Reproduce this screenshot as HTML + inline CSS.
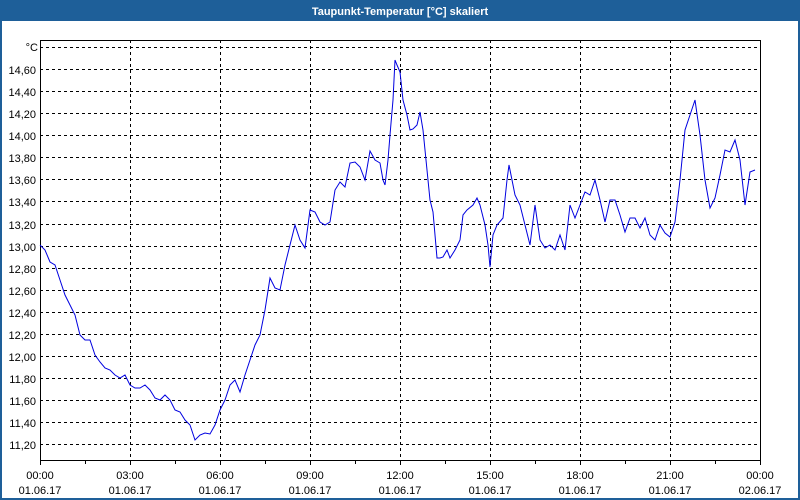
<!DOCTYPE html>
<html><head><meta charset="utf-8"><style>
html,body{margin:0;padding:0;background:#fff;}
body{width:800px;height:500px;position:relative;overflow:hidden;font-family:"Liberation Sans","DejaVu Sans",sans-serif;}
</style></head><body>
<svg width="800" height="500" xmlns="http://www.w3.org/2000/svg" style="position:absolute;left:0;top:0">
<rect x="0" y="0" width="800" height="500" fill="#fff"/>
<rect x="0" y="0" width="800" height="21" fill="#1e5f99"/>
<rect x="0" y="0" width="2" height="500" fill="#1e5f99"/>
<rect x="798" y="0" width="2" height="500" fill="#1e5f99"/>
<rect x="0" y="498" width="800" height="2" fill="#1e5f99"/>
<text x="400" y="15" fill="#fff" font-size="11" font-weight="bold" text-anchor="middle">Taupunkt-Temperatur [°C] skaliert</text>
<g stroke="#000" stroke-width="1" stroke-dasharray="3,3" fill="none" shape-rendering="crispEdges">
<line x1="40" y1="47.5" x2="760" y2="47.5"/>
<line x1="40" y1="69.5" x2="760" y2="69.5"/>
<line x1="40" y1="91.5" x2="760" y2="91.5"/>
<line x1="40" y1="113.5" x2="760" y2="113.5"/>
<line x1="40" y1="135.5" x2="760" y2="135.5"/>
<line x1="40" y1="157.5" x2="760" y2="157.5"/>
<line x1="40" y1="179.5" x2="760" y2="179.5"/>
<line x1="40" y1="201.5" x2="760" y2="201.5"/>
<line x1="40" y1="224.5" x2="760" y2="224.5"/>
<line x1="40" y1="246.5" x2="760" y2="246.5"/>
<line x1="40" y1="268.5" x2="760" y2="268.5"/>
<line x1="40" y1="290.5" x2="760" y2="290.5"/>
<line x1="40" y1="312.5" x2="760" y2="312.5"/>
<line x1="40" y1="334.5" x2="760" y2="334.5"/>
<line x1="40" y1="356.5" x2="760" y2="356.5"/>
<line x1="40" y1="378.5" x2="760" y2="378.5"/>
<line x1="40" y1="400.5" x2="760" y2="400.5"/>
<line x1="40" y1="422.5" x2="760" y2="422.5"/>
<line x1="40" y1="444.5" x2="760" y2="444.5"/>
<line x1="130.5" y1="40" x2="130.5" y2="460"/>
<line x1="220.5" y1="40" x2="220.5" y2="460"/>
<line x1="310.5" y1="40" x2="310.5" y2="460"/>
<line x1="400.5" y1="40" x2="400.5" y2="460"/>
<line x1="490.5" y1="40" x2="490.5" y2="460"/>
<line x1="580.5" y1="40" x2="580.5" y2="460"/>
<line x1="670.5" y1="40" x2="670.5" y2="460"/>
</g>
<g stroke="#000" stroke-width="1" fill="none" shape-rendering="crispEdges">
<line x1="40.5" y1="40" x2="40.5" y2="465"/>
<line x1="40" y1="40.5" x2="761" y2="40.5"/>
<line x1="760.5" y1="40" x2="760.5" y2="465"/>
<line x1="40" y1="460.5" x2="761" y2="460.5"/>
<line x1="85.5" y1="460" x2="85.5" y2="464"/><line x1="130.5" y1="460" x2="130.5" y2="465"/>
<line x1="175.5" y1="460" x2="175.5" y2="464"/><line x1="220.5" y1="460" x2="220.5" y2="465"/>
<line x1="265.5" y1="460" x2="265.5" y2="464"/><line x1="310.5" y1="460" x2="310.5" y2="465"/>
<line x1="355.5" y1="460" x2="355.5" y2="464"/><line x1="400.5" y1="460" x2="400.5" y2="465"/>
<line x1="445.5" y1="460" x2="445.5" y2="464"/><line x1="490.5" y1="460" x2="490.5" y2="465"/>
<line x1="535.5" y1="460" x2="535.5" y2="464"/><line x1="580.5" y1="460" x2="580.5" y2="465"/>
<line x1="625.5" y1="460" x2="625.5" y2="464"/><line x1="670.5" y1="460" x2="670.5" y2="465"/>
<line x1="715.5" y1="460" x2="715.5" y2="464"/>
</g>
<g font-size="11" fill="#000" text-anchor="end">
<text x="38" y="51">°C</text>
<text x="36" y="74">14,60</text><text x="36" y="96">14,40</text><text x="36" y="118">14,20</text>
<text x="36" y="140">14,00</text><text x="36" y="162">13,80</text><text x="36" y="184">13,60</text>
<text x="36" y="206">13,40</text><text x="36" y="229">13,20</text><text x="36" y="251">13,00</text>
<text x="36" y="273">12,80</text><text x="36" y="295">12,60</text><text x="36" y="317">12,40</text>
<text x="36" y="339">12,20</text><text x="36" y="361">12,00</text><text x="36" y="383">11,80</text>
<text x="36" y="405">11,60</text><text x="36" y="427">11,40</text><text x="36" y="449">11,20</text>
</g>
<g font-size="11" fill="#000" text-anchor="middle">
<text x="40" y="479">00:00</text><text x="40" y="494">01.06.17</text>
<text x="130" y="479">03:00</text><text x="130" y="494">01.06.17</text>
<text x="220" y="479">06:00</text><text x="220" y="494">01.06.17</text>
<text x="310" y="479">09:00</text><text x="310" y="494">01.06.17</text>
<text x="400" y="479">12:00</text><text x="400" y="494">01.06.17</text>
<text x="490" y="479">15:00</text><text x="490" y="494">01.06.17</text>
<text x="580" y="479">18:00</text><text x="580" y="494">01.06.17</text>
<text x="670" y="479">21:00</text><text x="670" y="494">01.06.17</text>
<text x="760" y="479">00:00</text><text x="760" y="494">02.06.17</text>
</g>
<polyline fill="none" stroke="#0000e0" stroke-width="1" points="40,245 45,250 50,262 55,265 60,280 65,295 70,305 75,315 80,335 85,340 90,340 95,355 100,362 105,368 110,370 115,375 120,378 125,375 130,385 135,388 140,388 145,385 150,390 155,398 160,400 165,395 170,400 175,410 180,412 185,420 190,425 195,440 200,435 205,433 210,434 215,425 220,410 225,400 230,385 235,380 240,392 245,375 250,360 255,345 260,335 265,310 270,278 275,288 280,290 285,265 290,245 295,225 300,240 305,248 310,210 315,212 320,222 325,225 330,222 335,190 340,182 345,187 350,163 355,162 360,167 365,180 370,151 375,160 380,163 383,180 385,185 388,160 390,135 393,100 395,60 397,65 400,72 403,100 407,115 410,130 413,129 417,125 420,112 423,130 426,160 430,200 433,212 437,258 440,258 443,257 447,250 450,258 455,250 460,240 463,215 467,210 473,205 477,198 480,205 485,225 488,245 490,267 493,235 497,225 503,218 507,180 509,165 515,195 520,205 525,225 530,245 535,205 540,240 545,248 550,245 555,250 560,235 565,250 570,205 575,218 580,205 585,192 590,195 595,180 600,200 605,222 610,200 615,200 620,215 625,232 630,218 635,218 640,228 645,218 650,235 655,240 660,225 665,233 670,237 675,222 680,180 685,130 690,115 695,100 700,135 705,180 710,208 715,198 720,175 725,150 730,152 735,140 740,160 745,205 750,172 755,170"/>
</svg>
</body></html>
